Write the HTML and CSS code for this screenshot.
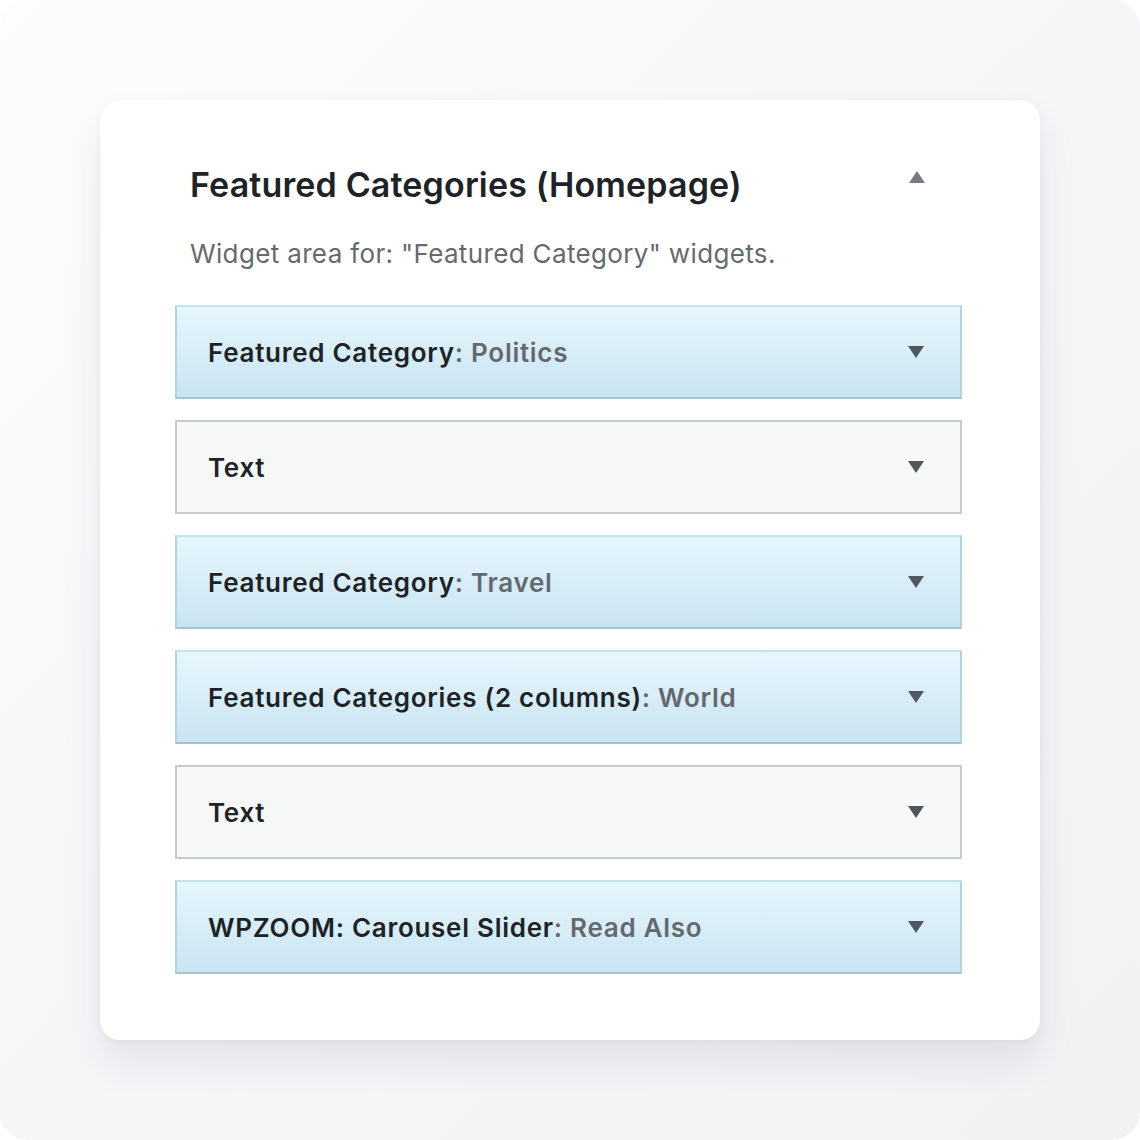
FILE: index.html
```html
<!DOCTYPE html>
<html>
<head>
<meta charset="utf-8">
<link rel="stylesheet" href="styles.css">
</head>
<body>
<div class="canvas">
  <div class="card">
    <div class="area-head">
      <h2 class="area-title">Featured Categories (Homepage)</h2>
      <span class="tri tri-up"></span>
    </div>
    <p class="area-desc">Widget area for: "Featured Category" widgets.</p>
    <div class="widgets">
      <div class="widget blue"><span class="w-title">Featured Category<span class="w-sub">: Politics</span></span><span class="tri tri-down"></span></div>
      <div class="widget gray"><span class="w-title">Text</span><span class="tri tri-down"></span></div>
      <div class="widget blue"><span class="w-title">Featured Category<span class="w-sub">: Travel</span></span><span class="tri tri-down"></span></div>
      <div class="widget blue"><span class="w-title">Featured Categories (2 columns)<span class="w-sub">: World</span></span><span class="tri tri-down"></span></div>
      <div class="widget gray"><span class="w-title">Text</span><span class="tri tri-down"></span></div>
      <div class="widget blue"><span class="w-title">WPZOOM: Carousel Slider<span class="w-sub">: Read Also</span></span><span class="tri tri-down"></span></div>
    </div>
  </div>
</div>
</body>
</html>
```
FILE: styles.css
```css
html, body {
  margin: 0;
  padding: 0;
  background: #ffffff;
}
body {
  font-family: Inter, "Noto Sans", "Liberation Sans", sans-serif;
}
.canvas {
  width: 1140px;
  height: 1140px;
  box-sizing: border-box;
  border-radius: 28px;
  background: linear-gradient(135deg, #fdfdfe 0%, #f6f7f9 40%, #f1f2f4 100%);
  padding: 100px;
}
.card {
  width: 940px;
  height: 940px;
  box-sizing: border-box;
  background: #ffffff;
  border-radius: 20px;
  box-shadow: 0 22px 40px rgba(30, 40, 60, 0.09), 0 2px 6px rgba(30, 40, 60, 0.04);
  padding: 61px 78px 0 75px;
}
.area-head {
  display: flex;
  align-items: center;
  justify-content: space-between;
  padding: 0 37px 0 15px;
}
.area-title {
  margin: 0;
  font-size: 34px;
  line-height: 48px;
  font-weight: 600;
  color: #1d2327;
  letter-spacing: 0.15px;
}
.area-desc {
  margin: 28px 0 0 15px;
  font-size: 26px;
  line-height: 34px;
  color: #646970;
  letter-spacing: 0.35px;
}
.widgets {
  margin-top: 34px;
  display: flex;
  flex-direction: column;
  gap: 21px;
}
.widget {
  height: 94px;
  box-sizing: border-box;
  display: flex;
  align-items: center;
  justify-content: space-between;
  padding: 0 36px 0 31px;
  border: 2px solid #c3c4c7;
}
.widget.blue {
  background: linear-gradient(180deg, #e6f6fd 0%, #c9e5f2 100%);
  border-color: #b3d3e3;
  border-top-color: #c5e1ee;
  border-bottom-color: #a0c3d6;
}
.widget.gray {
  background: #f6f7f7;
  border-color: #c9cacc;
}
.w-title {
  font-size: 26px;
  font-weight: 600;
  color: #1d2327;
  letter-spacing: 0.72px;
}
.w-sub {
  color: #646970;
}
.tri {
  width: 0;
  height: 0;
  border-left: 8px solid transparent;
  border-right: 8px solid transparent;
}
.tri-down {
  border-top: 12px solid #50575e;
}
.tri-up {
  border-bottom: 12px solid #787c82;
  margin-top: -16px;
}
```
